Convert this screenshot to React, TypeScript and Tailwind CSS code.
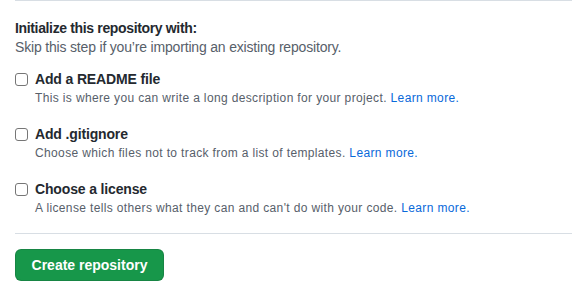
import React from "react"

type Option = {
    title: string
    description: string
}

const options: Option[] = [
    { title: "Add a README file", description: "This is where you can write a long description for your project." },
    { title: "Add .gitignore", description: "Choose which files not to track from a list of templates." },
    { title: "Choose a license", description: "A license tells others what they can and can't do with your code." },
]

const App: React.FC = () => {
    return (
        <div className="w-[572px] h-[299px] bg-white pl-[15px] font-['Liberation_Sans',Arial,sans-serif] text-[#24292f]">
            <div className="border-t border-[#d8dee4] pt-[18px]">
                <h3 className="text-[14px] leading-[19px] font-bold tracking-[-0.35px]">Initialize this repository with:</h3>
                <p className="text-[14px] leading-[19px] text-[#57606a] tracking-[-0.18px]">Skip this step if you’re importing an existing repository.</p>

                <div className="mt-[12px] flex flex-col gap-[17px]">
                    {options.map((opt) => (
                        <label key={opt.title} className="flex gap-[7px] cursor-pointer">
                            <input
                                type="checkbox"
                                className="appearance-none w-[13px] h-[13px] mt-[4px] shrink-0 rounded-[3px] border border-[#767676] bg-white"
                            />
                            <div>
                                <div className="text-[14px] leading-[20px] font-bold tracking-[-0.15px]">{opt.title}</div>
                                <div className="text-[12px] leading-[18px] text-[#57606a] tracking-[0.36px]">
                                    {opt.description}{" "}
                                    <a href="#" className="text-[#0969da]">Learn more.</a>
                                </div>
                            </div>
                        </label>
                    ))}
                </div>

                <div className="mt-[16px] border-t border-[#d8dee4] pt-[15px]">
                    <button
                        type="button"
                        className="w-[149px] h-[32px] rounded-[6px] bg-[#17974a] border border-[rgba(27,31,36,0.15)] text-white text-[14px] font-bold"
                    >
                        Create repository
                    </button>
                </div>
            </div>
        </div>
    )
}

export default App
